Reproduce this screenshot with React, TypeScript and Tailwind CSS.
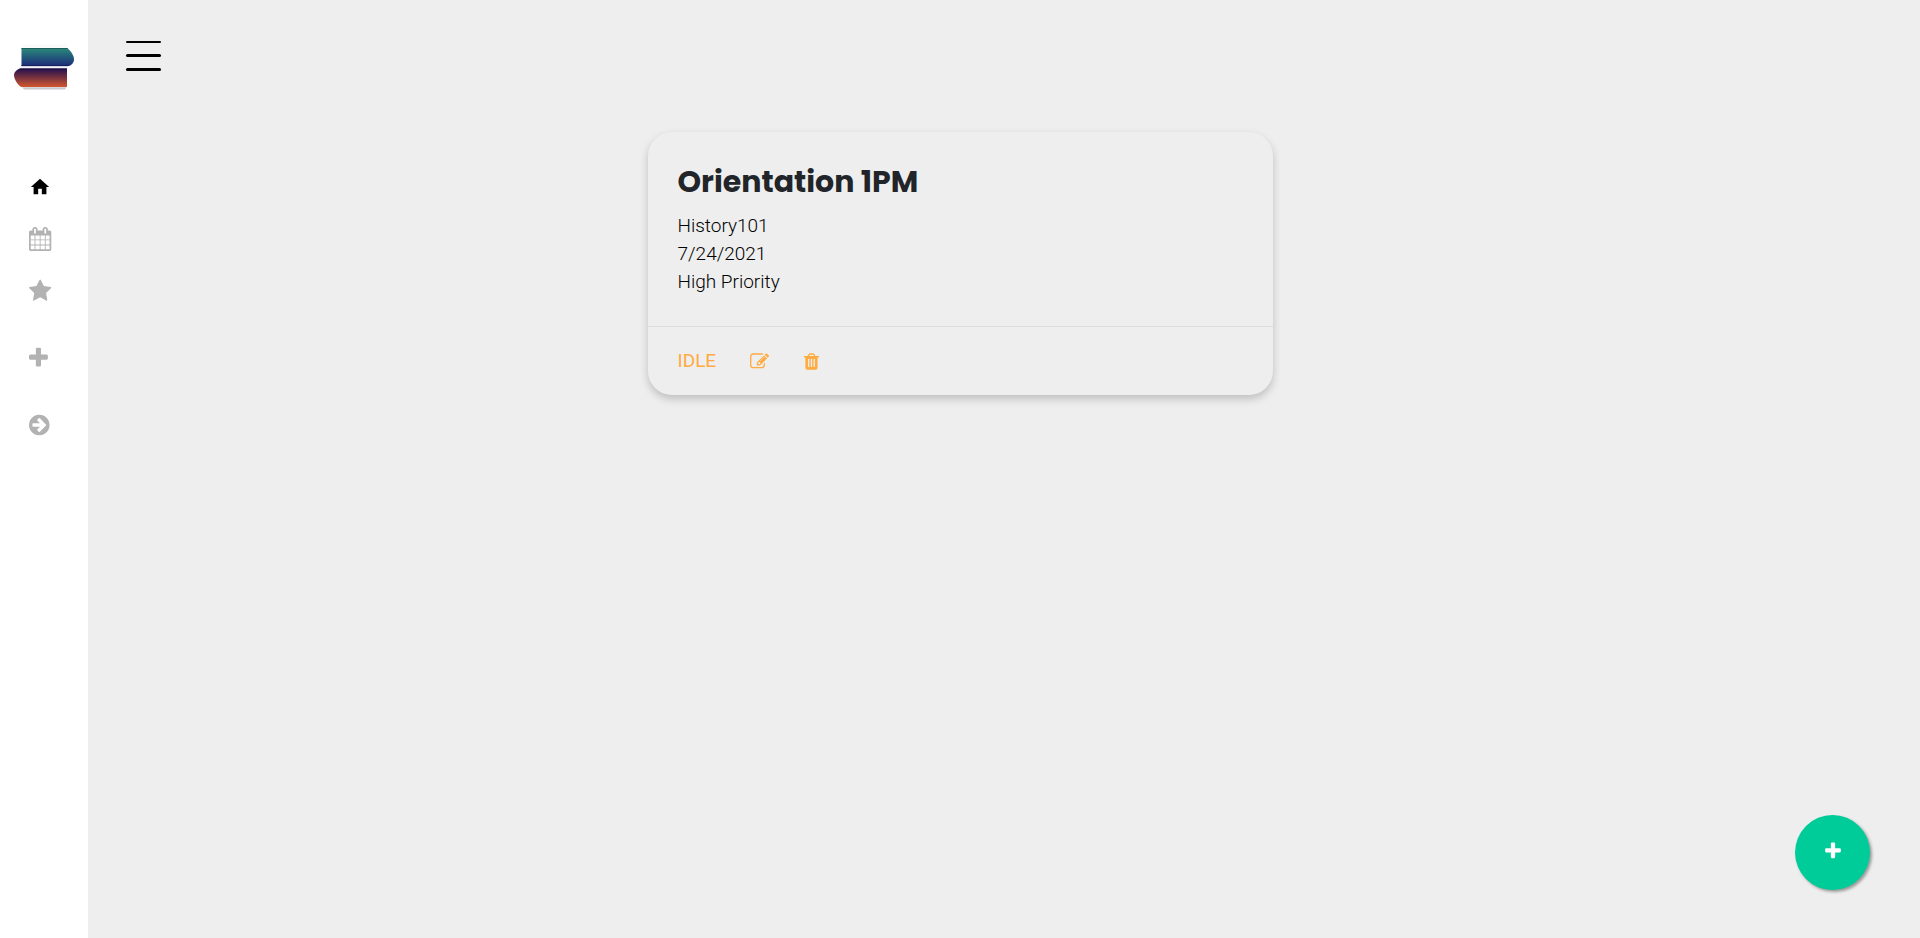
import React from "react";

const paths = {
  home: "M10 20v-6h4v6h5v-8h3L12 3 2 12h3v8z",
  calendar:
    "M192 1664h288v-288h-288v288zm352 0h320v-288h-320v288zm-352-352h288v-320h-288v320zm352 0h320v-320h-320v320zm-352-384h288v-288h-288v288zm736 736h320v-288h-320v288zm-384-736h320v-288h-320v288zm768 736h288v-288h-288v288zm-384-352h320v-320h-320v320zm-352-864v-288q0-13-9.5-22.5t-22.5-9.5h-64q-13 0-22.5 9.5t-9.5 22.5v288q0 13 9.5 22.5t22.5 9.5h64q13 0 22.5-9.5t9.5-22.5zm736 864h288v-320h-288v320zm-384-384h320v-288h-320v288zm384 0h288v-288h-288v288zm32-480v-288q0-13-9.5-22.5t-22.5-9.5h-64q-13 0-22.5 9.5t-9.5 22.5v288q0 13 9.5 22.5t22.5 9.5h64q13 0 22.5-9.5t9.5-22.5zm384-64v1280q0 52-38 90t-90 38h-1408q-52 0-90-38t-38-90v-1280q0-52 38-90t90-38h128v-96q0-66 47-113t113-47h64q66 0 113 47t47 113v96h384v-96q0-66 47-113t113-47h64q66 0 113 47t47 113v96h128q52 0 90 38t38 90z",
  star: "M1728 647q0 22-26 48l-363 354 86 500q1 7 1 20 0 21-10.5 35.5t-30.5 14.5q-19 0-40-12l-449-236-449 236q-22 12-40 12-21 0-31.5-14.5t-10.5-35.5q0-6 2-20l86-500-364-354q-25-27-25-48 0-37 56-46l502-73 225-455q19-41 49-41t49 41l225 455 502 73q56 9 56 46z",
  plus: "M1600 736v192q0 40-28 68t-68 28h-416v416q0 40-28 68t-68 28h-192q-40 0-68-28t-28-68v-416h-416q-40 0-68-28t-28-68v-192q0-40 28-68t68-28h416v-416q0-40 28-68t68-28h192q40 0 68 28t28 68v416h416q40 0 68 28t28 68z",
  arrow:
    "M1413 896q0-27-18-45l-91-91-362-362q-18-18-45-18t-45 18l-91 91q-18 18-18 45t18 45l189 189h-502q-26 0-45 19t-19 45v128q0 26 19 45t45 19h502l-189 189q-19 19-19 45t19 45l91 91q18 18 45 18t45-18l362-362 91-91q18-18 18-45zm251 0q0 209-103 385.5t-279.5 279.5-385.5 103-385.5-103-279.5-279.5-103-385.5 103-385.5 279.5-279.5 385.5-103 385.5 103 279.5 279.5 103 385.5z",
  edit: "M888 1184l116-116-152-152-116 116v56h96v96h56zm440-720q-16-16-33 1l-350 350q-17 17-1 33t33-1l350-350q17-17 1-33zm80 594v190q0 119-84.5 203.5t-203.5 84.5h-832q-119 0-203.5-84.5t-84.5-203.5v-832q0-119 84.5-203.5t203.5-84.5h832q63 0 117 25 15 7 18 23 3 17-9 29l-49 49q-14 14-32 8-23-6-45-6h-832q-66 0-113 47t-47 113v832q0 66 47 113t113 47h832q66 0 113-47t47-113v-126q0-13 9-22l64-64q15-15 35-7t20 29zm-96-738l288 288-672 672h-288v-288zm444 132l-92 92-288-288 92-92q28-28 68-28t68 28l152 152q28 28 28 68t-28 68z",
  trash:
    "M704 1376v-704q0-14-9-23t-23-9h-64q-14 0-23 9t-9 23v704q0 14 9 23t23 9h64q14 0 23-9t9-23zm256 0v-704q0-14-9-23t-23-9h-64q-14 0-23 9t-9 23v704q0 14 9 23t23 9h64q14 0 23-9t9-23zm256 0v-704q0-14-9-23t-23-9h-64q-14 0-23 9t-9 23v704q0 14 9 23t23 9h64q14 0 23-9t9-23zm-544-992h448l-48-117q-7-9-17-11h-317q-10 2-17 11zm928 32v64q0 14-9 23t-23 9h-96v948q0 83-47 143.5t-113 60.5h-832q-66 0-113-58.5t-47-141.5v-952h-96q-14 0-23-9t-9-23v-64q0-14 9-23t23-9h309l70-167q15-37 54-63t79-26h320q40 0 79 26t54 63l70 167h309q14 0 23 9t9 23z",
};

type IconProps = { d: string; viewBox: string; className: string };

function Icon({ d, viewBox, className }: IconProps) {
  return (
    <svg viewBox={viewBox} fill="currentColor" className={className} aria-hidden="true">
      <path d={d} />
    </svg>
  );
}

function Logo() {
  return (
    <svg viewBox="0 0 64 52" className="h-[52px] w-16" aria-hidden="true">
      <defs>
        <linearGradient id="logo-top" x1="0" y1="0" x2="0" y2="1">
          <stop offset="0" stopColor="#2a8a7c" />
          <stop offset="1" stopColor="#1c2a78" />
        </linearGradient>
        <linearGradient id="logo-bottom" x1="0" y1="0" x2="0" y2="1">
          <stop offset="0" stopColor="#22104f" />
          <stop offset="1" stopColor="#d2562f" />
        </linearGradient>
      </defs>
      <path d="M11 4.5h43l2 3H9.5z" fill="#fafafa" />
      <path d="M9.5 8H55c3 2 7 7 7 11.5 0 3-3 6.5-6 6.5H9.5z" fill="url(#logo-top)" />
      <path d="M9.5 8H55l1.500 1h-47z" fill="#1f5f57" />
      <path d="M9.5 25H58l-2 1H9.5z" fill="#141c5c" />
      <path d="M9.5 26.3H56v.9H9.5z" fill="#c5c7d6" />
      <path d="M10 47.300h44.500l-1.500 2.200H12z" fill="#c8c8cc" />
      <path d="M55 28.500H9c-3 0-7 3-7 6.500 0 4.500 4 10 7 12h46z" fill="url(#logo-bottom)" />
      <path d="M8 28.500h47v1H6z" fill="#170a38" />
    </svg>
  );
}

function Sidebar() {
  return (
    <aside className="flex w-[88px] shrink-0 flex-col bg-white pt-10">
      <a href="#dashboard" aria-label="Dashboard" className="ml-3">
        <Logo />
      </a>
      <nav aria-label="Main" className="mt-[83px] flex flex-col items-start gap-[43px] pl-[29px] text-[#b2b2b2]">
        <div className="flex flex-col gap-7">
          <a href="#home" aria-label="Home" className="flex h-6 items-center text-black">
            <Icon d={paths.home} viewBox="0 0 24 24" className="h-[22px] w-[22px]" />
          </a>
          <a href="#calendar" aria-label="Calendar">
            <Icon d={paths.calendar} viewBox="64 0 1792 1792" className="h-6 w-6" />
          </a>
          <a href="#starred" aria-label="Starred">
            <Icon d={paths.star} viewBox="64 0 1792 1792" className="h-6 w-6" />
          </a>
        </div>
        <a href="#new" aria-label="New">
          <Icon d={paths.plus} viewBox="192 0 1792 1792" className="h-6 w-6" />
        </a>
        <a href="#sign-out" aria-label="Sign out">
          <Icon d={paths.arrow} viewBox="128 0 1792 1792" className="h-6 w-6" />
        </a>
      </nav>
    </aside>
  );
}

function TaskCard() {
  return (
    <article className="mx-auto w-full max-w-[625px] rounded-3xl bg-[#eee] shadow-[0_4px_8px_0_rgba(0,0,0,0.2)]">
      <div className="px-[30px] pt-[30px] pb-[30px]">
        <h2 className="mb-[10px] font-['Poppins','Inter',sans-serif] text-[30px] leading-10 font-bold text-[#212529]">
          Orientation 1PM
        </h2>
        <p className="text-[19px] leading-7 font-light">History101</p>
        <p className="text-[19px] leading-7 font-light">7/24/2021</p>
        <p className="text-[19px] leading-7 font-light">High Priority</p>
      </div>
      <div className="flex items-center border-t border-[#dcdcdc] px-[30px] py-5 text-[#ffab40]">
        <button type="button" className="text-[19px] leading-7">
          IDLE
        </button>
        <button type="button" aria-label="Edit" className="ml-[34px]">
          <Icon d={paths.edit} viewBox="0 0 1792 1792" className="h-[19px] w-[19px]" />
        </button>
        <button type="button" aria-label="Delete" className="ml-[35px]">
          <Icon d={paths.trash} viewBox="192 0 1792 1792" className="h-[19px] w-[19px]" />
        </button>
      </div>
    </article>
  );
}

export default function App() {
  return (
    <div className="flex min-h-screen bg-[#eee] font-['Roboto',sans-serif] text-black">
      <Sidebar />
      <div className="flex flex-1 flex-col">
        <header className="flex px-[38px] pt-[41px]">
          <button type="button" aria-label="Toggle menu" className="flex w-[35px] flex-col gap-[11px]">
            <span className="h-[2px] w-full rounded-sm bg-black" />
            <span className="h-[3px] w-full rounded-sm bg-black" />
            <span className="h-[3px] w-full rounded-sm bg-black" />
          </button>
        </header>
        <main className="pt-[61px] pr-[88px]">
          <TaskCard />
        </main>
      </div>
      <button
        type="button"
        aria-label="Add task"
        className="fixed right-[50px] bottom-12 flex h-[75px] w-[75px] items-center justify-center rounded-full bg-[#0c9] pb-[3px] text-white shadow-[2px_2px_3px_#999]"
      >
        <Icon d={paths.plus} viewBox="0 0 1792 1792" className="h-5 w-5" />
      </button>
    </div>
  );
}
